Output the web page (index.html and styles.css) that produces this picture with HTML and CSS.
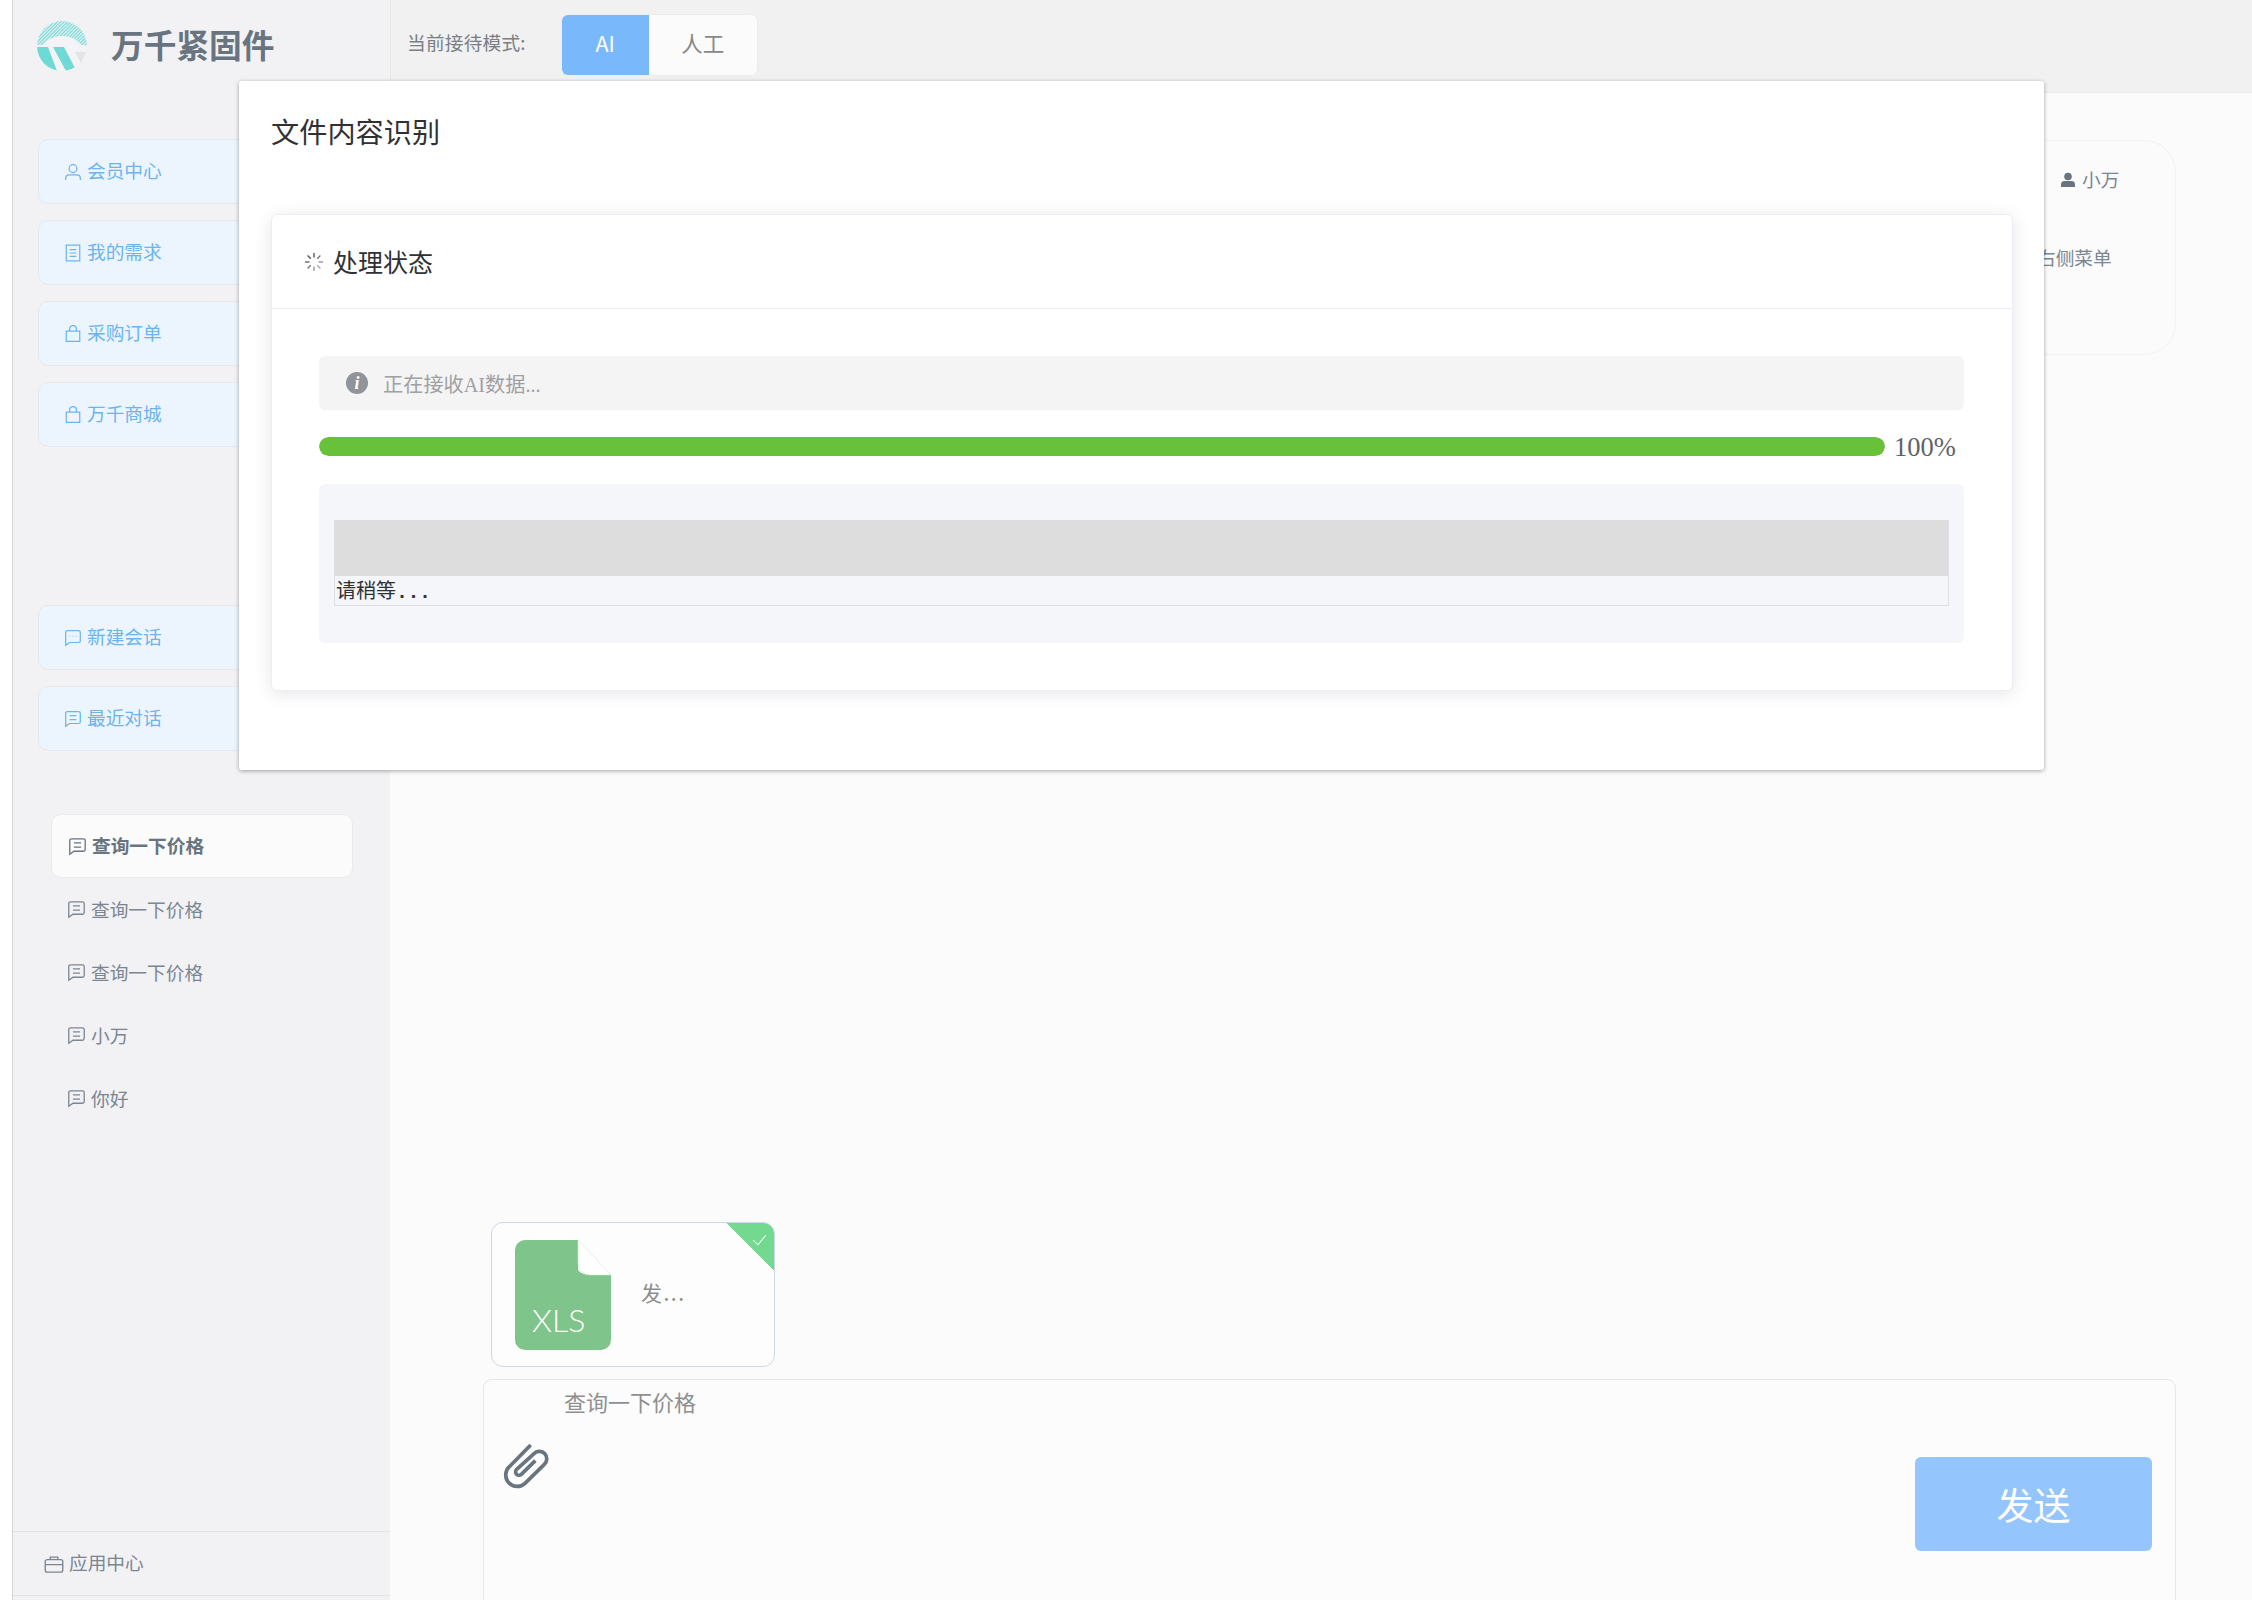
FILE: index.html
```html
<!DOCTYPE html>
<html>
<head>
  <title>万千紧固件</title>
  <link rel="stylesheet" href="styles.css">
</head>
<body>
  <svg class="sprite" width="0" height="0">
    <defs>
      <symbol id="i-chat" viewBox="0 0 16 16"><path d="M3 1.5h10a1.5 1.5 0 0 1 1.500 1.500v7.500a1.500 1.500 0 0 1-1.500 1.500H5L1.500 14.500V3A1.500 1.500 0 0 1 3 1.500zM5 5h6M5 8.500h6"/></symbol>
      <symbol id="i-bag" viewBox="0 0 16 16"><path d="M2 5.500h12v9H2zM5 5.500V3.500a3 3 0 0 1 6 0v2"/></symbol>
    </defs>
  </svg>

  <div class="app">
    <aside class="sidebar">
      <div class="brand">
        <svg class="logo" viewBox="0 0 50 50">
          <defs>
            <pattern id="hatch" width="2.400" height="2.400" patternUnits="userSpaceOnUse" patternTransform="rotate(45)">
              <rect width="1.200" height="2.400" fill="#6fd9d6"/>
            </pattern>
            <clipPath id="disc"><circle cx="25" cy="25" r="25"/></clipPath>
          </defs>
          <g clip-path="url(#disc)">
            <rect width="50" height="24" fill="url(#hatch)"/>
            <ellipse cx="25" cy="31" rx="21" ry="16" fill="#f4f4f6"/>
            <rect y="24" width="50" height="26" fill="#f4f4f6"/>
            <path d="M0 26h11l9 24H9L0 38zM16 26h11l11 21-9 3z" fill="#6fd9d6"/>
            <path d="M38 31h11l-5 11z" fill="#e2e3e4"/>
          </g>
        </svg>
        <span class="brand-name">万千紧固件</span>
      </div>

      <nav class="nav">
        <a class="nav-item">
          <svg class="icon" viewBox="0 0 16 16"><circle cx="8" cy="5" r="3.500"/><path d="M1.500 15v-1.500a3 3 0 0 1 3-3h7a3 3 0 0 1 3 3V15"/></svg>
          <span class="label">会员中心</span>
        </a>
        <a class="nav-item">
          <svg class="icon" viewBox="0 0 16 16"><path d="M2 1h12v14H2zM5 5h6M5 8h6M5 11h6"/></svg>
          <span class="label">我的需求</span>
        </a>
        <a class="nav-item"><svg class="icon"><use href="#i-bag"/></svg><span class="label">采购订单</span></a>
        <a class="nav-item"><svg class="icon"><use href="#i-bag"/></svg><span class="label">万千商城</span></a>
      </nav>

      <nav class="nav nav-chat">
        <a class="nav-item">
          <svg class="icon" viewBox="0 0 16 16"><path d="M3 1.500h10a1.500 1.500 0 0 1 1.500 1.500v7.500a1.500 1.500 0 0 1-1.500 1.500H5L1.500 14.500V3A1.500 1.500 0 0 1 3 1.500zM5 6.500h.5M7.800 6.500h.5M10.600 6.500h.5"/></svg>
          <span class="label">新建会话</span>
        </a>
        <a class="nav-item"><svg class="icon"><use href="#i-chat"/></svg><span class="label">最近对话</span></a>
      </nav>

      <ul class="conv-list">
        <li class="conv conv-active"><svg class="icon"><use href="#i-chat"/></svg><span class="label">查询一下价格</span></li>
        <li class="conv"><svg class="icon"><use href="#i-chat"/></svg><span class="label">查询一下价格</span></li>
        <li class="conv"><svg class="icon"><use href="#i-chat"/></svg><span class="label">查询一下价格</span></li>
        <li class="conv"><svg class="icon"><use href="#i-chat"/></svg><span class="label">小万</span></li>
        <li class="conv"><svg class="icon"><use href="#i-chat"/></svg><span class="label">你好</span></li>
      </ul>

      <div class="side-footer">
        <svg class="icon" viewBox="0 0 16 16"><path d="M2.500 4.500h11a1.500 1.500 0 0 1 1.500 1.500v7a1.500 1.500 0 0 1-1.500 1.500h-11A1.500 1.500 0 0 1 1 13V6a1.500 1.500 0 0 1 1.500-1.500zM5 4.500V2.500h6v2M1 8.500h14"/></svg>
        <span class="label">应用中心</span>
      </div>
    </aside>

    <main class="main">
      <header class="topbar">
        <span class="mode-label">当前接待模式:</span>
        <div class="mode-switch">
          <span class="mode-btn mode-on">AI</span>
          <span class="mode-btn">人工</span>
        </div>
      </header>

      <section class="content">
        <div class="user-panel">
          <div class="user-name">
            <svg class="user-icon" viewBox="0 0 16 16"><circle cx="8" cy="4.500" r="3.800"/><path d="M1 15v-2.500A3.500 3.500 0 0 1 4.500 9h7a3.500 3.500 0 0 1 3.500 3.500V15z"/></svg>
            <span class="label">小万</span>
          </div>
          <div class="user-menu">右侧菜单</div>
        </div>

        <div class="file-card">
          <svg class="file-icon" viewBox="0 0 96 110">
            <path d="M10 0h53v30a12 12 0 0 0 12 4h21v66a10 10 0 0 1-10 10H10a10 10 0 0 1-10-10V10A10 10 0 0 1 10 0z" fill="#7fc48a"/>
            <path d="M63 0l33 35H75a12 12 0 0 1-12-12z" fill="#fff" stroke="#cfe8d4" stroke-width=".6"/>
            <text x="17" y="92" class="file-ext">XLS</text>
          </svg>
          <span class="file-name">发...</span>
          <span class="file-ok">
            <svg viewBox="0 0 16 16"><path d="M2 8.500l4.500 4.500L14 4"/></svg>
          </span>
        </div>

        <div class="composer">
          <svg class="clip" viewBox="0 0 240 210"><path d="M122 45L58 110A33 33 0 0 0 105 160L163 103A21 21 0 0 0 133 70L80 118A10 10 0 0 0 94 133L136 92"/></svg>
          <div class="composer-text">查询一下价格</div>
          <button class="send">发送</button>
        </div>
      </section>
    </main>
  </div>

  <div class="modal">
    <h2 class="modal-title">文件内容识别</h2>
    <div class="status-card">
      <div class="status-head">
        <svg class="spinner" viewBox="0 0 20 20">
          <path d="M10 1v4.500" stroke="#555"/>
          <path d="M16.400 3.600l-3.200 3.200" stroke="#777"/>
          <path d="M19 10h-4.500" stroke="#999"/>
          <path d="M16.400 16.400l-3.200-3.200" stroke="#aaa"/>
          <path d="M10 19v-4.500" stroke="#999"/>
          <path d="M3.600 16.400l3.200-3.200" stroke="#777"/>
          <path d="M1 10h4.500" stroke="#666"/>
          <path d="M3.600 3.600l3.200 3.200" stroke="#555"/>
        </svg>
        <span class="status-title">处理状态</span>
      </div>
      <div class="status-body">
        <div class="alert">
          <svg class="alert-icon" viewBox="0 0 22 22">
            <circle cx="11" cy="11" r="11" fill="#909399"/>
            <text x="11" y="17" class="alert-i">i</text>
          </svg>
          正在接收AI数据...
        </div>
        <div class="progress">
          <div class="progress-track"><div class="progress-fill" style="width: 100%"></div></div>
          <span class="progress-text">100%</span>
        </div>
        <div class="result">
          <div class="result-pre">
            <div class="result-band"></div>
            <div class="result-line">请稍等<span class="dots">...</span></div>
          </div>
        </div>
      </div>
    </div>
  </div>
</body>
</html>
```

FILE: styles.css
```css
* {
  box-sizing: border-box;
}

html, body {
  margin: 0;
  height: 100%;
}

body {
  font-family: "Noto Sans CJK SC", "Noto Sans", sans-serif;
  font-size: 18.7px;
  color: #606266;
  overflow: hidden;
  position: relative;
}

.sprite {
  position: absolute;
}

.app {
  display: flex;
  height: 1600px;
  padding-left: 12px;
  background: linear-gradient(90deg, #fff, #f0f0f2);
}

.icon {
  width: 18px;
  height: 18px;
  flex: none;
  fill: none;
  stroke: currentColor;
  stroke-width: 1.100;
}

/* noto sits low in its line box */
.label {
  margin-bottom: 4px;
}

/* sidebar */
.sidebar {
  width: 378px;
  flex: none;
  display: flex;
  flex-direction: column;
  background: #f2f2f5;
  border-left: 1px solid #d6d6d8;
}

.brand {
  height: 93px;
  display: flex;
  align-items: center;
  padding: 0 0 0 24px;
  gap: 24px;
}

.logo {
  width: 50px;
  height: 50px;
  margin-top: -2px;
  flex: none;
}

.brand-name {
  font-size: 32.700px;
  font-weight: 600;
  color: #68747f;
  margin-bottom: 6px;
}

.nav {
  display: flex;
  flex-direction: column;
  gap: 16px;
  margin: 46px 25px 0;
}

.nav-chat {
  margin-top: 158px;
}

.nav-item {
  height: 65px;
  display: flex;
  align-items: center;
  gap: 5px;
  padding-left: 25px;
  color: #6db4ef;
  background: #ecf4fd;
  border: 1px solid #e6e8ec;
  border-radius: 10px;
}

.conv-list {
  list-style: none;
  margin: 63px 37px 0 38px;
  padding: 0;
}

.conv {
  height: 63px;
  display: flex;
  align-items: center;
  gap: 5px;
  padding-left: 16px;
  color: #7b8692;
}

.conv .label {
  margin-bottom: 3px;
}

.conv .icon {
  width: 19px;
  height: 19px;
}

.conv-active {
  height: 64px;
  font-weight: 700;
  color: #68747f;
  background: #fbfbfb;
  border: 1px solid #ebebed;
  border-radius: 10px;
}

.side-footer {
  height: 65px;
  margin-top: auto;
  margin-bottom: 4px;
  display: flex;
  align-items: center;
  gap: 5px;
  padding-left: 31px;
  color: #7b8692;
  border-top: 1px solid #e4e4e6;
  border-bottom: 1px solid #e4e4e6;
}

.side-footer .icon {
  width: 20px;
  height: 20px;
}

/* main */
.main {
  flex: 1;
  min-width: 0;
  display: flex;
  flex-direction: column;
  background: #fbfbfb;
}

.topbar {
  height: 93px;
  flex: none;
  display: flex;
  align-items: center;
  gap: 35px;
  padding: 0 0 3px 16px;
  background: #f1f1f1;
  border-left: 1px solid #e8e8e8;
  border-bottom: 1px solid #eaeaea;
}

.mode-label {
  color: #7a7f85;
  letter-spacing: .2px;
  margin-bottom: 6px;
}

.mode-switch {
  display: flex;
  height: 62px;
  border: 1px solid #ececec;
  border-radius: 7px;
  overflow: hidden;
  background: #fbfbfb;
}

.mode-btn {
  width: 108px;
  display: flex;
  align-items: center;
  justify-content: center;
  padding-bottom: 4px;
  font-size: 21.500px;
  color: #888;
}

.mode-on {
  width: 87px;
  color: #fff;
  background: #7ab8fc;
}

.content {
  flex: 1;
  min-height: 0;
  display: flex;
  flex-direction: column;
  overflow: hidden;
}

.user-panel {
  align-self: flex-end;
  width: 380px;
  height: 215px;
  flex: none;
  margin: 47px 76px 0 0;
  padding: 24px 0 0 240px;
  color: #7b8692;
  border: 1px solid #f2f2f2;
  border-radius: 32px;
}

.user-name {
  display: flex;
  align-items: center;
  gap: 6px;
  margin-left: 23px;
  height: 30px;
}

.user-icon {
  width: 16px;
  height: 16px;
  fill: #68747f;
}

.user-menu {
  margin-top: 47px;
  line-height: 30px;
}

.file-card {
  position: relative;
  width: 284px;
  height: 145px;
  flex: none;
  margin: auto 0 0 101px;
  display: flex;
  align-items: center;
  gap: 30px;
  padding-left: 23px;
  background: #fdfdfd;
  border: 1px solid #cdd8e6;
  border-radius: 12px;
  overflow: hidden;
}

.file-icon {
  width: 96px;
  height: 110px;
  flex: none;
}

.file-ext {
  font-family: Lato, "Noto Sans", sans-serif;
  font-size: 32px;
  font-weight: 300;
  fill: #fff;
}

.file-name {
  font-size: 21px;
  letter-spacing: 1.500px;
  color: #8d8d8d;
  margin-bottom: 6px;
}

.file-ok {
  position: absolute;
  top: 0;
  right: 0;
  width: 48px;
  height: 48px;
  background: linear-gradient(225deg, #72d98f 50%, transparent 50%);
}

.file-ok svg {
  position: absolute;
  top: 8px;
  right: 6px;
  width: 17px;
  height: 17px;
  fill: none;
  stroke: #fff;
  stroke-width: 1;
}

.composer {
  height: 240px;
  flex: none;
  margin: 12px 76px -19px 93px;
  display: grid;
  grid-template-columns: 80px 1fr 237px;
  padding-right: 23px;
  background: #fcfcfc;
  border: 1px solid #e7e7e7;
  border-radius: 9px;
}

.clip {
  width: 80px;
  height: 70px;
  margin: 50px 0 0 6px;
  fill: none;
  stroke: #68747f;
  stroke-width: 11;
}

.composer-text {
  font-size: 22px;
  line-height: 32px;
  padding-top: 5px;
  color: #8f8f8f;
}

.send {
  height: 94px;
  margin-top: 77px;
  font-family: inherit;
  font-size: 37px;
  color: #fff;
  background: #94c5fc;
  border: none;
  border-radius: 6px;
}

/* modal, sits over the page */
.modal {
  position: absolute;
  left: 239px;
  top: 81px;
  width: 1805px;
  height: 689px;
  padding: 34px 31px 0 32px;
  font-family: "Liberation Serif", "Noto Sans CJK SC", serif;
  background: #fff;
  border-radius: 3px;
  box-shadow: 0 1px 4px rgba(0,0,0,0.35);
}

.modal-title {
  margin: 0 0 61px;
  font-size: 28.200px;
  font-weight: 400;
  line-height: 38px;
  color: #303133;
}

.status-card {
  height: 477px;
  background: #fff;
  border: 1px solid #ebeef5;
  border-radius: 6px;
  box-shadow: 0 3px 18px rgba(0,0,0,0.1);
}

.status-head {
  height: 94px;
  display: flex;
  align-items: center;
  gap: 9px;
  padding-left: 32px;
  font-size: 25px;
  color: #303133;
  border-bottom: 1px solid #ebeef5;
}

.status-title {
  margin-bottom: 2px;
}

.spinner {
  width: 20px;
  height: 20px;
  fill: none;
  stroke-width: 1.400;
}

.status-body {
  padding: 47px 48px 0 47px;
}

.alert {
  height: 54px;
  display: flex;
  align-items: center;
  gap: 15px;
  padding-left: 27px;
  font-size: 20.200px;
  color: #a0a0a2;
  background: #f4f4f5;
  border-radius: 6px;
}

.alert-icon {
  width: 22px;
  height: 22px;
  flex: none;
}

.alert-i {
  font-family: "Liberation Serif", serif;
  font-size: 18px;
  font-weight: 700;
  font-style: italic;
  text-anchor: middle;
  fill: #fff;
}

.progress {
  display: flex;
  align-items: center;
  height: 19px;
  margin-top: 27px;
}

.progress-track {
  flex: 1;
  height: 19px;
  background: #ebeef5;
  border-radius: 10px;
  overflow: hidden;
}

.progress-fill {
  height: 100%;
  background: #67c23a;
  border-radius: 10px;
}

.progress-text {
  width: 70px;
  margin: 2px 0 0 9px;
  font-size: 26.500px;
  color: #606266;
}

.result {
  height: 159px;
  margin-top: 28px;
  padding: 36px 15px;
  background: #f5f6fa;
  border-radius: 6px;
}

.result-pre {
  height: 86px;
  border: 1px solid #dcdfe6;
  border-top: none;
}

.result-band {
  height: 56px;
  background: #dddddd;
}

.result-line {
  font-family: "Liberation Mono", "Noto Sans CJK SC", monospace;
  font-size: 20px;
  line-height: 27px;
  padding: 3px 0 0 1px;
  color: #303133;
}

.dots {
  font-weight: 700;
  letter-spacing: -.5px;
}
```
